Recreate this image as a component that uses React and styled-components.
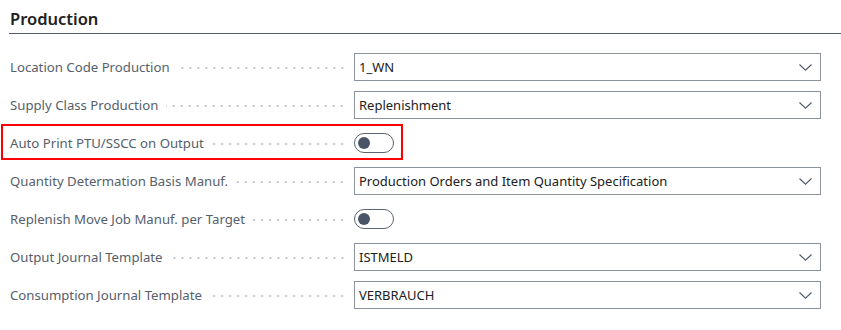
import * as React from 'react';
import styled, { createGlobalStyle } from 'styled-components';

const GlobalStyle = createGlobalStyle`
  html, body {
    margin: 0;
    padding: 0;
    background: #fff;
  }
  body {
    font-family: "Noto Sans", "Open Sans", sans-serif;
  }
`;

const fields = [
  { label: 'Location Code Production', kind: 'select', value: '1_WN' },
  { label: 'Supply Class Production', kind: 'select', value: 'Replenishment' },
  { label: 'Auto Print PTU/SSCC on Output', kind: 'toggle', highlight: true },
  { label: 'Quantity Determation Basis Manuf.', kind: 'select', value: 'Production Orders and Item Quantity Specification' },
  { label: 'Replenish Move Job Manuf. per Target', kind: 'toggle' },
  { label: 'Output Journal Template', kind: 'select', value: 'ISTMELD' },
  { label: 'Consumption Journal Template', kind: 'select', value: 'VERBRAUCH' },
];

const Chevron = () => (
  <svg width="13" height="7" viewBox="0 0 13 7" fill="none">
    <path d="M0.5 0.5 L6.5 6.2 L12.5 0.5" stroke="#505c6d" strokeWidth="1.1" />
  </svg>
);

const App = () => (
  <Page>
    <GlobalStyle />
    <Heading>Production</Heading>
    <Form>
      {fields.map((f) => (
        <Row key={f.label} $highlight={f.highlight}>
          <LabelCell>
            <Label>{f.label}</Label>
            <Leader />
          </LabelCell>
          {f.kind === 'select' ? (
            <Select>
              <SelectValue>{f.value}</SelectValue>
              <Chevron />
            </Select>
          ) : (
            <ToggleCell>
              <Toggle>
                <Knob />
              </Toggle>
            </ToggleCell>
          )}
        </Row>
      ))}
    </Form>
  </Page>
);

const Page = styled.div`
  width: 841px;
  height: 330px;
  padding-left: 9px;
  box-sizing: border-box;
  overflow: hidden;
`;

const Heading = styled.h2`
  margin: 0;
  padding: 6px 0 0 1px;
  height: 27px;
  line-height: 26px;
  font-size: 16.5px;
  font-weight: 600;
  color: #212121;
  border-bottom: 1px solid #505c6d;
`;

const Form = styled.div`
  display: flex;
  flex-direction: column;
  gap: 10px;
  padding-top: 19px;
  width: 812px;
`;

const Row = styled.div`
  position: relative;
  display: grid;
  grid-template-columns: 337px 1fr;
  column-gap: 8px;
  height: 28px;
  align-items: center;

  &::after {
    content: '';
    display: ${(p) => (p.$highlight ? 'block' : 'none')};
    position: absolute;
    left: -8px;
    top: -5px;
    width: 402px;
    height: 36px;
    border: 2px solid #ff0000;
    box-sizing: border-box;
    pointer-events: none;
  }
`;

const LabelCell = styled.div`
  display: flex;
  align-items: center;
  padding-left: 1px;
  min-width: 0;
`;

const Label = styled.span`
  font-size: 13.2px;
  color: #56606b;
  white-space: nowrap;
  padding-right: 8px;
`;

const Leader = styled.span`
  flex: 1;
  height: 4px;
  margin-top: 1px;
  background-image: radial-gradient(circle, #c4c8cd 1px, transparent 1.4px);
  background-size: 8px 4px;
  background-repeat: repeat-x;
  background-position: right center;
`;

const Select = styled.div`
  display: flex;
  align-items: center;
  justify-content: space-between;
  height: 28px;
  box-sizing: border-box;
  border: 1px solid #8c939d;
  padding: 0 8px 0 4px;
  background: #fff;
`;

const SelectValue = styled.span`
  font-size: 13px;
  color: #212121;
  white-space: nowrap;
`;

const ToggleCell = styled.div`
  display: flex;
  align-items: center;
`;

const Toggle = styled.div`
  display: flex;
  align-items: center;
  width: 40px;
  height: 20px;
  box-sizing: border-box;
  border: 1px solid #5b6470;
  border-radius: 10px;
  padding-left: 3px;
`;

const Knob = styled.span`
  width: 12px;
  height: 12px;
  border-radius: 50%;
  background: #4a5567;
`;

export default App;
